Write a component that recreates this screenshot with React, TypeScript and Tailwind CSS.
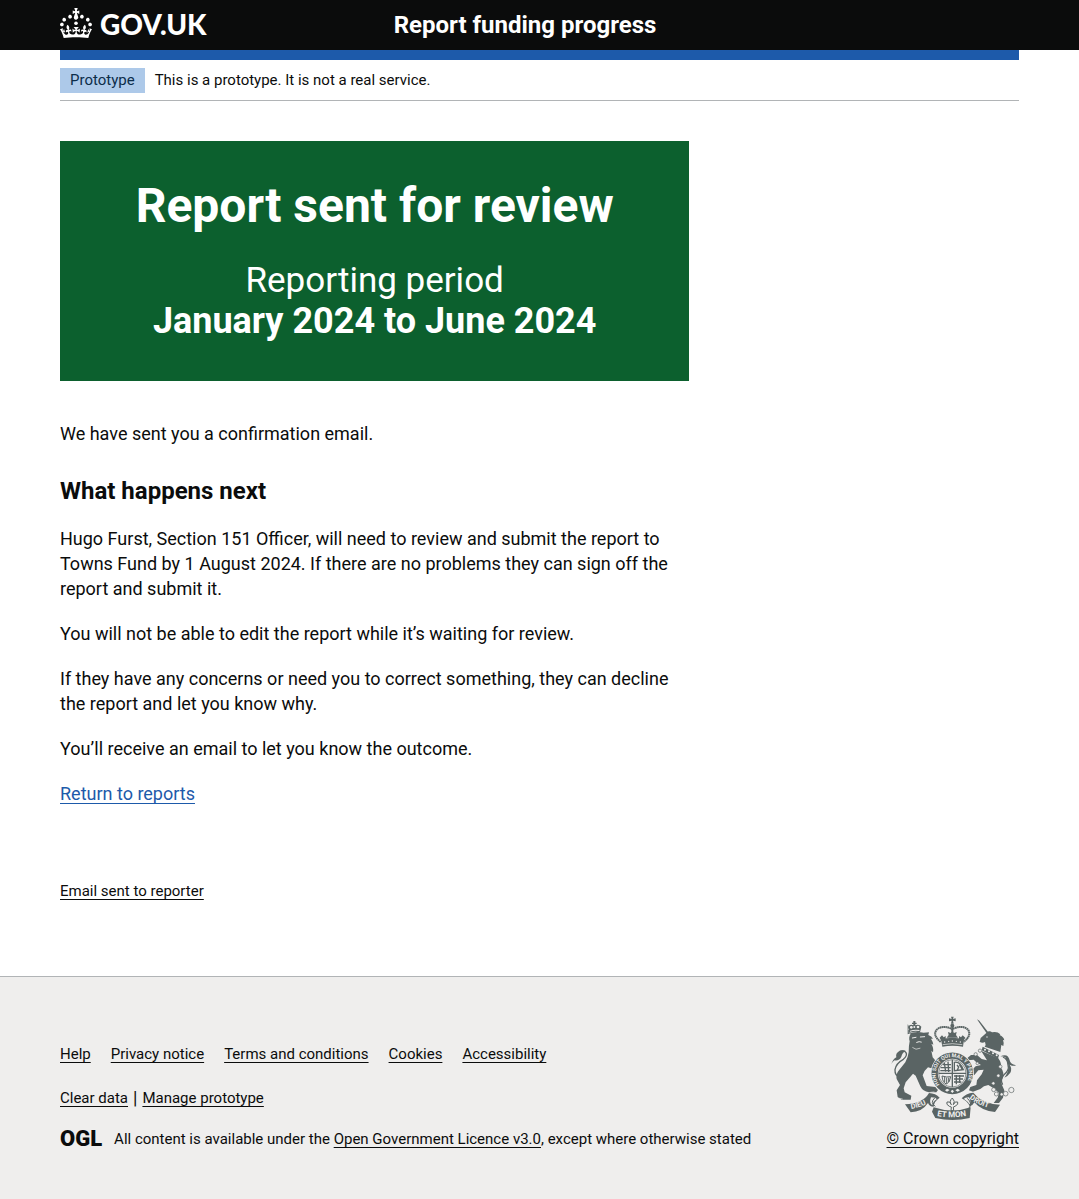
import type { ReactNode } from "react";

function Container({ children }: { children: ReactNode }) {
  return <div className="mx-[60px]">{children}</div>;
}

function CrownLogo() {
  return (
    <span className="flex items-center gap-2">
      <svg viewBox="0 0 32 30" className="h-[30px] w-8 fill-white" aria-hidden="true">
        <path d="M22.6 10.4c-1 .4-2-.1-2.4-1-.4-.9.1-2 1-2.4.9-.4 2 .1 2.4 1s-.1 2-1 2.4m5.9 3c-1 .4-2-.1-2.4-1-.4-.9.1-2 1-2.4.9-.4 2 .1 2.4 1s-.1 2-1 2.4m2.3 4.8c-1 .4-2-.1-2.4-1-.4-.9.1-2 1-2.4.9-.4 2 .1 2.4 1s-.1 2-1 2.4M17 4.7l2.3 1.2V2.5l-2.3.7-.2-.2.9-3h-3.4l.9 3-.2.2-2.3-.7v3.4L15 4.7c.1.1.1.2.2.2l-1.3 4c-.1.2-.1.4-.1.6 0 1.1.8 2 1.9 2.2h.7c1-.2 1.9-1.1 1.9-2.1 0-.2 0-.4-.1-.6l-1.3-4c-.1-.2 0-.2.1-.3m-7.6 5.7c.9.4 2-.1 2.4-1 .4-.9-.1-2-1-2.4-.9-.4-2 .1-2.4 1s0 2 1 2.4m-5.9 3c.9.4 2-.1 2.4-1 .4-.9-.1-2-1-2.4-.9-.4-2 .1-2.4 1s.1 2 1 2.4m-2.3 4.8c.9.4 2-.1 2.4-1 .4-.9-.1-2-1-2.4-.9-.4-2 .1-2.4 1s0 2 1 2.4m14.8 11c4.4 0 8.6.3 12.3.8 1.1-4.5 2.4-7 3.7-8.8l-2.5-.9c.2 1.3.3 1.9 0 2.7-.4-.4-.8-1.1-1.1-2.3l-1.2 4c.7-.5 1.3-.8 2-.9-1.1 2.5-2.6 3.1-3.5 3-1.1-.2-1.7-1.2-1.5-2.1.3-1.2 1.5-1.5 2.1-.1 1.1-2.3-.8-3-2-2.3 1.9-1.9 2.1-3.5.6-5.6-2.1 1.6-2.1 3.2-1.2 5.5-1.2-1.4-3.2-.6-2.5 1.6.9-1.4 2.1-.5 1.9.8-.2 1.1-1.7 2.1-3.5 1.9-2.7-.2-2.9-2.1-2.9-3.6.7-.1 1.9.5 2.9 1.9l.4-4.3c-1.1 1.1-2.1 1.4-3.2 1.4.4-1.2 2.1-3 2.1-3h-5.4s1.7 1.9 2.1 3c-1.1 0-2.1-.2-3.2-1.4l.4 4.3c1-1.4 2.2-2 2.9-1.9-.1 1.5-.2 3.4-2.9 3.6-1.9.2-3.4-.8-3.5-1.9-.2-1.3 1-2.2 1.9-.8.7-2.3-1.2-3-2.5-1.6.9-2.2.9-3.9-1.2-5.5-1.5 2-1.3 3.7.6 5.6-1.2-.7-3.1 0-2 2.3.6-1.4 1.8-1.1 2.1.1.2.9-.3 1.9-1.5 2.1-.9.2-2.4-.5-3.5-3 .6 0 1.2.3 2 .9l-1.2-4c-.3 1.1-.7 1.9-1.1 2.3-.3-.8-.2-1.4 0-2.7l-2.9.9C1.3 23 2.6 25.5 3.7 30c3.7-.5 7.9-.8 12.3-.8" />
        <circle cx="16" cy="15.2" r="1.8" />
      </svg>
      <span className="pt-[2px] font-[Lato,sans-serif] text-[28px] leading-[30px] font-black">GOV.UK</span>
    </span>
  );
}

function RoyalArms() {
  return (
    <svg viewBox="27 30 390 315" className="h-[105px] w-[130px]" fill="#5a6464" aria-hidden="true">
      <defs>
        <path id="motto" d="M179 239A50 50 0 1 1 255 239" />
        <path id="dieu" d="M94 312Q130 307 160 283" />
        <path id="etmon" d="M171 333Q217 342 268 331" />
        <path id="droit" d="M268 280Q298 304 348 314" />
      </defs>

      {/* lion's tail */}
      <path d="M61 217Q44 213 45 194q3-19 25-31 13-11 8-20-5-8-19-4" fill="none" stroke="#5a6464" strokeWidth="4" />
      <path d="M34 177q5-15 15-20-3-12 8-18 11-6 21-1-11 4-14 17-6 13-20 11-6 3-10 11z" />
      {/* lion's crown, head, body and legs */}
      <path d="M88 84l-4-19q7-9 16-4v-4h-4v-4h4v-5h6v5h4v4h-4v4q11-5 18 4l-4 17q-15-5-32 2z" />
      <g fill="#efeeed">
        <circle cx="94" cy="67" r="4" /><circle cx="103" cy="66" r="3" /><circle cx="114" cy="66" r="4" />
        <path d="M90 77q14-5 29-2l-1 3q-14-3-28 2z" />
      </g>
      <path d="M83 88q20-10 48-5l16-1-2 8q10 3 14 11h-6q6 9 7 18l-6-3q8 14 5 26l-5-5 4 20 12 14 10 4v14l-16 4-20-6q-12 10-16 24l12 32 26 3 8 9-5 7h-22q-19-3-26-18l-14-32-8-6-22 26-6 18 3 12 20 10-2 12H65l-12-8-3-20 10-16-10-18q-3-16 8-28l18-22q8-14 10-30 0-20 3-33-4-12 3-23-8-1-5-9-5-3-2-9 2-9-2-10z" />
      <g stroke="#efeeed" fill="none" strokeWidth="3" strokeLinecap="round">
        <path d="M97 99l11-2M121 96l13-1M110 112q8-4 14-1" />
        <path d="M98 128q9 9 22 2M58 280l9 2M64 289l9 1M152 262l10-1" strokeWidth="2" />
      </g>

      {/* royal crown */}
      <path d="M213 35h8l-2 7 8-2v9l-8-2 2 9h-8l2-9-8 2v-9l8 2z" />
      <circle cx="217" cy="62" r="6" />
      <path d="M182 111Q157 91 170 74q16-14 42-4l5 3 5-3q27-10 42 4 12 17-13 37" fill="none" stroke="#5a6464" strokeWidth="6" strokeDasharray="5 1" />
      <path d="M214 66h6v22h-6zM217 76l5 8 8-3-2 9 6 8H200l6-8-2-9 8 3zM186 91l5 6 6-4v15h-13l-5-10zM248 91l-5 6-6-4v15h13l6-10z" />
      <path d="M183 103q34-9 69 0l-3 22q-31-6-62 0z" />
      <g fill="#efeeed">
        <circle cx="194" cy="111" r="2" /><circle cx="206" cy="109" r="2" /><circle cx="217" cy="108" r="2" /><circle cx="229" cy="109" r="2" /><circle cx="241" cy="111" r="2" />
      </g>
      <path d="M188 119q29-6 59 0" stroke="#efeeed" strokeWidth="2" fill="none" />

      {/* unicorn */}
      <path d="M291 43l7 4 28 36-5 3-23-33z" />
      <path d="M299 111l3-12 16-14 8-6q6-1 10 3 15-4 25 6l-2 2q12 5 14 16l-4-1q4 10 1 18l-6-3-3 21-47-16q5-5 1-14-8 4-15 0z" />
      <path d="M308 125l49 25-3 11-49-25z" />
      <g fill="#efeeed">
        <circle cx="315" cy="134" r="3" /><circle cx="327" cy="139" r="3" /><circle cx="339" cy="145" r="3" /><circle cx="350" cy="151" r="3" /><circle cx="321" cy="96" r="2" />
      </g>
      <path d="M303 137l52 23q10 14 8 28 12 16 4 32-6 10 0 22l6 14-4 22-12 16h-16l12-16 4-14-16-14-16-10q-14 2-24 12l-22 8-12-4 4-10 18-6 2-14 14-18 6-14-16 2-12 14-10 2v-14l14-14 16-4-14-8-8-8-16 2-2-8 10-8h18l14 12 16 4z" />
      <path d="M368 239q-9-14 4-30 17-14 12-29 0-17-15-24" fill="none" stroke="#5a6464" strokeWidth="4" />
      <path d="M361 154q23-11 28 12 2 12 19 15-7 4-19-2 8 11 2 24-8 11-18 15 13-15 12-37-1-12-8-19 3-8-16-8z" />
      <g fill="#efeeed" stroke="#5a6464" strokeWidth="2">
        <circle cx="300" cy="137" r="5" /><circle cx="287" cy="148" r="5" /><circle cx="292" cy="175" r="4" /><circle cx="361" cy="185" r="5" /><circle cx="355" cy="212" r="5" /><circle cx="340" cy="235" r="5" />
        <circle cx="341" cy="254" r="6" /><circle cx="349" cy="267" r="6" /><circle cx="365" cy="268" r="5" /><circle cx="377" cy="266" r="7" /><circle cx="394" cy="255" r="8" />
      </g>

      {/* garter and quartered shield */}
      <circle cx="217" cy="205" r="65" fill="#efeeed" />
      <circle cx="217" cy="205" r="53" fill="none" stroke="#5a6464" strokeWidth="19" />
      <circle cx="217" cy="205" r="41" fill="#efeeed" stroke="#5a6464" strokeWidth="2" />
      <path d="M217 164v82M176 205h82" stroke="#5a6464" strokeWidth="4" />
      <g fill="none" stroke="#5a6464" strokeWidth="4">
        <path d="M188 179h25M182 188h30M181 197h31M193 174l4 26M204 170l2 31" />
        <path d="M223 172q17-4 27 22l-27 3zM231 180l5 6-4 9M238 179l5 7 3 7M222 213h30M222 222h27M222 231h22M229 210v28M239 210v24" />
        <path d="M186 213q2 22 14 24 10-5 12-22l-12 1zM194 216v16M200 218v18M206 218v13" strokeWidth="3" />
      </g>
      <text fill="#efeeed" fontFamily="Roboto, sans-serif" fontWeight="700" fontSize="16">
        <textPath href="#motto">HONI SOIT QUI MAL Y PENSE</textPath>
      </text>
      <path fill="#efeeed" d="M201 251l8 4-8 5-6-4zM217 254l5 5-5 5-5-5zM233 251l7 5-7 4-7-4z" />

      {/* motto ribbon */}
      <path d="M75 298q54-2 72-34 20 1 32 14-17 11-18 27-13 0-17-11-18 27-52 28z" />
      <path d="M153 277q16 0 17 6-12 7-13 18-11-6-4-24z" fill="#efeeed" />
      <path d="M161 307q56 19 111 0l-3 32q-51 12-103 0l-10-19z" />
      <path d="M360 299q-56-4-80-36-23 2-35 17 18 9 24 24 11-4 14-12 22 26 62 29z" />
      <path d="M267 277q-13 0-15 5 13 8 16 16 7-4-1-21z" fill="#efeeed" />
      <path d="M164 279q-15 14 2 25M262 280q17 16 5 29" fill="none" stroke="#5a6464" strokeWidth="3" />
      <g fill="#efeeed" fontFamily="Roboto, sans-serif" fontWeight="700" fontSize="22">
        <text><textPath href="#dieu">DIEU</textPath></text>
        <text fontSize="24"><textPath href="#etmon">ET MON</textPath></text>
        <text><textPath href="#droit">DROIT</textPath></text>
      </g>
      {/* fleur below the shield */}
      <path d="M217 279q10 10 3 20 5-12 13-8 4 7-8 13l-5 2 1 11h-8l1-11-6-2q-11-6-7-13 9-4 13 8-8-10 3-20z" fill="none" stroke="#5a6464" strokeWidth="3" />
    </svg>
  );
}

const footerLinks = ["Help", "Privacy notice", "Terms and conditions", "Cookies", "Accessibility"];

function FooterLink({ children }: { children: ReactNode }) {
  return (
    <a href="#" className="underline decoration-1 underline-offset-3 [text-decoration-skip-ink:none]">
      {children}
    </a>
  );
}

export default function App() {
  return (
    <div className="flex min-h-screen flex-col bg-white font-[Roboto,sans-serif] text-[#0b0c0c]">
      <header className="bg-[#0b0c0c] text-white">
        <Container>
          <div className="flex h-[50px] items-center">
            <a href="#" className="w-1/3 shrink-0 pb-1">
              <CrownLogo />
            </a>
            <a href="#" className="pl-[14px] text-2xl font-bold">
              Report funding progress
            </a>
          </div>
        </Container>
      </header>

      <Container>
        <div className="h-[10px] bg-[#1d5aaa]" />
        <div className="flex items-center gap-[10px] border-b border-[#b1b4b6] pt-2 pb-[7px] text-[15px] leading-[25px]">
          <strong className="bg-[#adc9e9] px-[10px] font-normal text-[#0c2d4a]">Prototype</strong>
          <span>This is a prototype. It is not a real service.</span>
        </div>
      </Container>

      <Container>
        <main className="pt-10 pb-[75px] text-lg leading-[25px]">
          <div className="w-2/3 pr-[10px]">
            <section className="mb-10 bg-[#0c602e] px-[35px] py-10 text-center text-white">
              <h1 className="mb-[30px] text-5xl leading-[50px] font-bold">Report sent for review</h1>
              <p className="text-[35px] leading-[40px]">Reporting period</p>
              <p className="text-4xl leading-[40px] font-bold">January 2024 to June 2024</p>
            </section>

            <p className="mb-[30px]">We have sent you a confirmation email.</p>
            <h2 className="mb-5 text-2xl leading-[30px] font-bold">What happens next</h2>
            <div className="flex flex-col gap-5">
              <p>
                Hugo Furst, Section 151 Officer, will need to review and submit the report to Towns Fund by 1 August
                2024. If there are no problems they can sign off the report and submit it.
              </p>
              <p>You will not be able to edit the report while it’s waiting for review.</p>
              <p>
                If they have any concerns or need you to correct something, they can decline the report and let you
                know why.
              </p>
              <p>You’ll receive an email to let you know the outcome.</p>
              <p>
                <a
                  href="#"
                  className="text-[#1d5aaa] underline decoration-1 underline-offset-3 [text-decoration-skip-ink:none]"
                >
                  Return to reports
                </a>
              </p>
            </div>
            <p className="mt-[75px] text-[15px] leading-5">
              <FooterLink>Email sent to reporter</FooterLink>
            </p>
          </div>
        </main>
      </Container>

      <footer className="grow border-t border-[#b1b4b6] bg-[#efeeed] pt-[38px] pb-[50px] text-[15px] leading-5">
        <Container>
          <div className="flex items-end justify-between gap-[30px]">
            <div>
              <ul className="mb-6 flex flex-wrap gap-x-5 gap-y-2">
                {footerLinks.map((label) => (
                  <li key={label}>
                    <FooterLink>{label}</FooterLink>
                  </li>
                ))}
              </ul>
              <div className="mb-[21px] flex gap-[5px]">
                <FooterLink>Clear data</FooterLink>
                <span className="text-lg leading-5">|</span>
                <FooterLink>Manage prototype</FooterLink>
              </div>
              <div className="flex items-center gap-3">
                <span className="text-[22px] leading-5 font-black">OGL</span>
                <span>
                  All content is available under the <FooterLink>Open Government Licence v3.0</FooterLink>, except
                  where otherwise stated
                </span>
              </div>
            </div>
            <a
              href="#"
              className="flex shrink-0 flex-col items-end gap-[9px] text-base leading-5 underline decoration-1 underline-offset-3 [text-decoration-skip-ink:none]"
            >
              <RoyalArms />
              <span>© Crown copyright</span>
            </a>
          </div>
        </Container>
      </footer>
    </div>
  );
}
